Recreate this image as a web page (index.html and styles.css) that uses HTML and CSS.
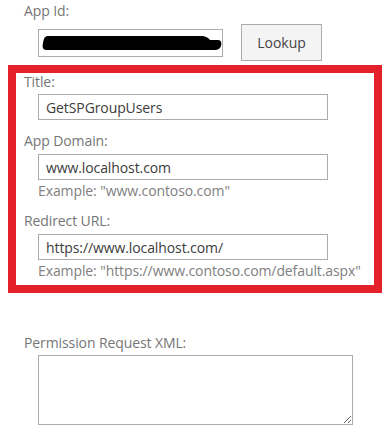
FILE: index.html
```html
<!DOCTYPE html>
<html>
    <head>
        <title>Register App</title>
        <meta name="viewport" content="width=device-width, initial-scale=1.0">
        <link rel="stylesheet" href="styles.css">
    </head>
<body>
    <div class='form'>
        <div class='field top-field'>
            <div class='label'>App Id:</div>
            <div class='lookup-row'>
                <div class='input input-appid'>
                    <svg class='redact' width='182' height='16' viewBox='0 0 182 16'>
                        <path d='M6 1 L160 1 C166 1 168 3 170 5 L178 5 C181 5 182 8 181 11 C180 14 178 15 175 15 L4 15 C1 15 0 12 1 8 C2 3 3 1 6 1 Z' fill='#000'/>
                    </svg>
                </div>
                <button class='button'>Lookup</button>
            </div>
        </div>

        <div class='highlight'>
            <div class='field'>
                <div class='label'>Title:</div>
                <input class='input input-wide first' type='text' value='GetSPGroupUsers'>
            </div>
            <div class='field spaced'>
                <div class='label'>App Domain:</div>
                <input class='input input-wide' type='text' value='www.localhost.com'>
                <div class='hint'>Example: "www.contoso.com"</div>
            </div>
            <div class='field spaced'>
                <div class='label'>Redirect URL:</div>
                <input class='input input-wide' type='text' value='https://www.localhost.com/'>
                <div class='hint'>Example: "https://www.contoso.com/default.aspx"</div>
            </div>
        </div>

        <div class='field permissions'>
            <div class='label'>Permission Request XML:</div>
            <textarea class='input xml'></textarea>
        </div>
    </div>
</body>
</html>
```

FILE: styles.css
```css
html {
    font-family: 'Open Sans', sans-serif;
    letter-spacing: -0.1px;
}
body {
    margin: 0;
    background: #fff;
}
.form {
    padding-top: 2px;
}
.field {
    padding-left: 24px;
}
.highlight .field {
    padding-left: 8px;
}
.label {
    font-size: 14px;
    line-height: 18px;
    color: #767676;
}
.hint {
    font-size: 14px;
    line-height: 18px;
    color: #808080;
    margin: 2px 0 0 14px;
}
.input {
    display: block;
    box-sizing: border-box;
    margin: 4px 0 0 14px;
    padding: 0 7px;
    border: 1px solid #ababab;
    background: #fff;
    font-family: 'Open Sans', sans-serif;
    font-size: 14px;
    letter-spacing: -0.1px;
    color: #3c3c3c;
    outline: none;
}
.input-wide {
    width: 290px;
    height: 26px;
}
.input-wide.first {
    margin-top: 3px;
}
.lookup-row {
    display: flex;
    align-items: center;
    margin-top: 4px;
}
.input-appid {
    width: 185px;
    height: 28px;
    margin-top: 0;
    padding: 0 0 0 3px;
    display: flex;
    align-items: center;
}
.redact {
    display: block;
}
.button {
    margin-left: 18px;
    width: 81px;
    height: 37px;
    border: 1px solid #ababab;
    background: #f4f4f4;
    color: #444;
    font-family: 'Open Sans', sans-serif;
    font-size: 14px;
    padding: 0;
}
.highlight {
    margin: 4px 0 0 8px;
    border: 8px solid #e4202a;
    padding: 0 0 5px 0;
}
.spaced {
    margin-top: 12px;
}
.permissions {
    margin-top: 41px;
}
.xml {
    width: 315px;
    height: 70px;
    margin-top: 3px;
    resize: both;
}
```
